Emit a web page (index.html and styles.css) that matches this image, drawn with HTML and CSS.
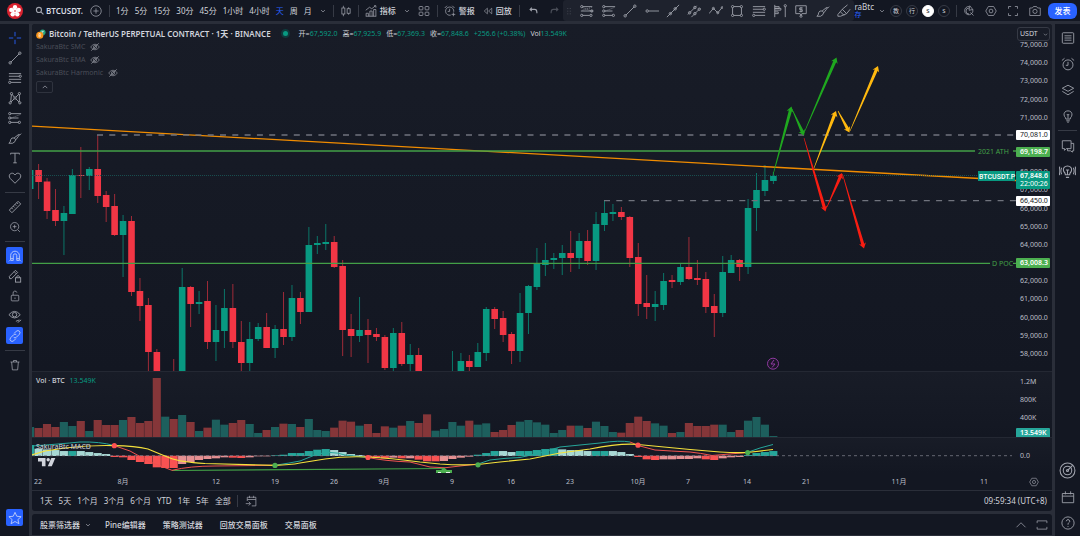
FILE: index.html
```html
<!DOCTYPE html>
<html lang="zh-CN">
<head>
<meta charset="utf-8">
<title>BTCUSDT.P</title>
<link rel="stylesheet" href="styles.css">
</head>
<body>
<svg class="sprite" aria-hidden="true">
  <symbol id="search" viewBox="0 0 16 16"><circle cx="7" cy="7" r="4.5"/><path d="M10.5 10.5 15 15"/></symbol>
  <symbol id="plus-circle" viewBox="0 0 16 16"><circle cx="8" cy="8" r="7"/><path d="M8 4.5v7M4.500 8h7"/></symbol>
  <symbol id="chev" viewBox="0 0 16 16"><path d="M3 5.500 8 10.500 13 5.500"/></symbol>
  <symbol id="chev-up" viewBox="0 0 16 16"><path d="M2 11 8 5 14 11"/></symbol>
  <symbol id="candles" viewBox="0 0 16 16"><path d="M4.500 1v3M4.500 12v3M11.500 3v2M11.500 11v2"/><rect x="2.500" y="4" width="4" height="8"/><rect x="9.500" y="5" width="4" height="6"/></symbol>
  <symbol id="indicators" viewBox="0 0 16 16"><path d="M1 7 6 3l3 2 5-4M12 1h2.500v2.500M1.500 15v-4h3v4M6.500 15V8h3v7M11.500 15V6h3v9M1 15h14"/></symbol>
  <symbol id="grid" viewBox="0 0 16 16"><rect x="1.500" y="2" width="5" height="4.500" rx="1"/><rect x="9.500" y="2" width="5" height="4.500" rx="1"/><rect x="1.500" y="9.500" width="5" height="4.500" rx="1"/><rect x="9.500" y="9.500" width="5" height="4.500" rx="1"/></symbol>
  <symbol id="alarm-plus" viewBox="0 0 16 16"><path d="M9 13.500A5.500 5.500 0 1 1 13 9M7.500 5v3.500H5M1 4l3-3M11 1l3 3M12.500 10v5M10 12.500h5"/></symbol>
  <symbol id="rewind" viewBox="0 0 16 16"><path d="M7 3.500 2 8l5 4.500zM14 3.500 9 8l5 4.500z"/></symbol>
  <symbol id="undo" viewBox="0 0 16 16"><path d="M5 3 2 6l3 3M2 6h8q4 0 4 5v2"/></symbol>
  <symbol id="redo" viewBox="0 0 16 16"><path d="M11 3l3 3-3 3M14 6H6q-4 0-4 5v2"/></symbol>
  <symbol id="drag" viewBox="0 0 16 16"><path stroke-dasharray="1.500 4" stroke-width="1.500" d="M5.500 2v13M10.500 2v13"/></symbol>
  <symbol id="fib-proj" viewBox="0 0 16 16"><path d="M3 3h11M1 8h14M3 13h8"/><path stroke-dasharray="1 1.500" d="M3 4 13 8M3 7 13 4"/><circle cx="2" cy="3" r="1.300"/><circle cx="13.500" cy="8" r="1.300"/><circle cx="2" cy="13" r="1.300"/><circle cx="12.500" cy="13" r="1.300"/></symbol>
  <symbol id="fib-long" viewBox="0 0 16 16"><path d="M3 3h12M3 8h9M3 13h9"/><path stroke-dasharray="1 1.500" d="M4 8 14 4"/><circle cx="2" cy="3" r="1.300"/><circle cx="2" cy="8" r="1.300"/><circle cx="2" cy="13" r="1.300"/><circle cx="13" cy="13" r="1.300"/></symbol>
  <symbol id="trend" viewBox="0 0 16 16"><path d="M3 13 13 3"/><circle cx="2.500" cy="13.500" r="1.400"/><circle cx="13.500" cy="2.500" r="1.400"/></symbol>
  <symbol id="ray" viewBox="0 0 16 16"><path d="M4 8h12"/><circle cx="2.500" cy="8" r="1.400"/></symbol>
  <symbol id="xline" viewBox="0 0 16 16"><path d="M1 15 15 1"/><circle cx="5" cy="11" r="1.400"/><circle cx="10.500" cy="5.500" r="1.400"/></symbol>
  <symbol id="channel" viewBox="0 0 16 16"><path d="M1 12 11 2M5 15 15 5"/><circle cx="3" cy="10" r="1.400"/><circle cx="9" cy="4" r="1.400"/><circle cx="9" cy="11" r="1.400"/><circle cx="14" cy="6" r="1.400"/></symbol>
  <symbol id="zigzag" viewBox="0 0 16 16"><path d="M0 11 5 5l5 5 5-6"/><circle cx="5" cy="5" r="1.200"/><circle cx="10" cy="10" r="1.200"/><circle cx="15" cy="4" r="1"/></symbol>
  <symbol id="rect" viewBox="0 0 16 16"><rect x="3" y="3" width="10" height="10"/><g class="dot"><circle cx="3" cy="3" r="1.300"/><circle cx="13" cy="3" r="1.300"/><circle cx="3" cy="13" r="1.300"/><circle cx="13" cy="13" r="1.300"/></g></symbol>
  <symbol id="fib" viewBox="0 0 16 16"><path d="M1 3h14M1 6h12M1 9.500h14M3.500 13H15"/><circle cx="14" cy="6" r="1.300"/><circle cx="2" cy="13" r="1.300"/></symbol>
  <symbol id="profile" viewBox="0 0 16 16"><path d="M2 1v14M2 3h5v2H2M2 5h7v2H2M2 9h4v2H2M14 3v12"/><circle cx="14" cy="2" r="1.300"/></symbol>
  <symbol id="note" viewBox="0 0 16 16"><path d="M2 2h12v9H9l-1 2-1-2H2zM10 4.500H6.500v2h3v2H6M8 3.500v6"/><circle cx="8" cy="14" r="1.200"/></symbol>
  <symbol id="brush" viewBox="0 0 16 16"><path d="M1 14q2-1 2-4 1-3 4-2 3 1 1 4-2 3-7 2zM7 8l5-4q2-1 0 2L9 10M13 5l2-2"/></symbol>
  <symbol id="highlight" viewBox="0 0 16 16"><path d="M1 14h3l7-3-5-5-5 6zM6 6l6-5M11 11l4-5M4 9l4 4"/></symbol>
  <symbol id="quick" viewBox="0 0 16 16"><path d="M8 2a5.500 5.500 0 1 0 5 4M8 12a4 4 0 0 1 0-8M10 10l4 4M9 1 8 7l5-1z"/></symbol>
  <symbol id="hex" viewBox="0 0 16 16"><path d="M4.500 2h7L15 8l-3.500 6h-7L1 8z"/><circle cx="8" cy="8" r="2.500"/></symbol>
  <symbol id="full" viewBox="0 0 16 16"><path d="M2 5V2h3.500M10.500 2H14v3M14 11v3h-3.500M5.500 14H2v-3"/></symbol>
  <symbol id="camera" viewBox="0 0 16 16"><path d="M1 4h3.500L6 2h4l1.500 2H15v10H1z"/><circle cx="8" cy="8.500" r="2.800"/></symbol>
  <symbol id="cross" viewBox="0 0 16 16"><path d="M8 1v5M8 10v5M1 8h5M10 8h5"/></symbol>
  <symbol id="pattern" viewBox="0 0 16 16"><path d="M3 13 4 3l4 5 5-5v10L8 8l-5.500 5.500"/><g class="dot"><circle cx="4" cy="3" r="1.300"/><circle cx="13" cy="3" r="1.300"/><circle cx="2.500" cy="13.500" r="1.300"/><circle cx="13.500" cy="13.500" r="1.300"/><circle cx="8" cy="8" r="1.300"/></g></symbol>
  <symbol id="text" viewBox="0 0 16 16"><path d="M3 4V2.500h10V4M8 2.500v11M6 13.500h4"/></symbol>
  <symbol id="heart" viewBox="0 0 16 16"><path d="M8 14 2.500 8.500C-1 4 5 0 8 4.500 11 0 17 4 13.500 8.500z"/></symbol>
  <symbol id="ruler" viewBox="0 0 16 16"><path d="M1.500 11.500 11.500 1.500l3 3-10 10zM4 9l1.500 1.500M6 7l1.500 1.500M8 5l1.500 1.500M10 3l1.500 1.500"/></symbol>
  <symbol id="zoom" viewBox="0 0 16 16"><circle cx="7.500" cy="7.500" r="5.500"/><path d="m12 12 2.500 2.500M7.500 5v5M5 7.500h5"/></symbol>
  <symbol id="magnet" viewBox="0 0 16 16"><path d="M3 13V7.500a5 5 0 0 1 10 0V13h-3V7.500a2 2 0 0 0-4 0V13zM3 11h3M10 11h3M1 14l1-1M15 14l-1-1"/></symbol>
  <symbol id="pen-lock" viewBox="0 0 16 16"><path d="M2 11 1.500 8.500l7-7 2.500 2.500-7 7zM7 3l2.500 2.500"/><rect x="8.500" y="10" width="6" height="5"/><path d="M10 10V8.500q1.500-2 3 0V10"/></symbol>
  <symbol id="lock" viewBox="0 0 16 16"><rect x="3" y="7" width="10" height="7.500" rx="1"/><path d="M5.500 7V4.500a2.500 2.500 0 0 1 5-1M8 10v2"/></symbol>
  <symbol id="eye" viewBox="0 0 16 16"><path d="M1 6.500Q7.500-1 14 6.500 7.500 14 1 6.500z"/><circle cx="7.500" cy="6.500" r="2.500"/><path d="M9 14l4-1.500M11 15.500l4-3"/></symbol>
  <symbol id="link" viewBox="0 0 16 16"><path d="m7 5 2.500-2.500q2-1.500 3.500 0t0 3.500L9.500 9.500Q8 11 6.500 9.500M9 11l-2.500 2.500q-2 1.500-3.500 0t0-3.500L6.500 6.500Q8 5 9.500 6.500"/></symbol>
  <symbol id="trash" viewBox="0 0 16 16"><path d="M2 4h12M3.500 4l1 10.500h7l1-10.500M6 4V2h4v2"/></symbol>
  <symbol id="star" viewBox="0 0 16 16"><path d="m8 1.500 2 4.500 5 .5-3.700 3.300L12.500 14.500 8 12l-4.500 2.500 1.200-4.700L1 6.500 6 6z"/></symbol>
  <symbol id="list" viewBox="0 0 16 16"><rect x="1.500" y="2" width="13" height="12" rx="1"/><path d="M4 5.500h8M4 8h8M4 10.500h8"/></symbol>
  <symbol id="alarm" viewBox="0 0 16 16"><circle cx="8" cy="9" r="5.700"/><path d="M8 5.500V9.500H5.500M1 4l3-2.500M12 1.500 15 4"/></symbol>
  <symbol id="layers" viewBox="0 0 16 16"><path d="m8 2.500 6.500 3.500L8 9.500 1.500 6zM1.500 9.500 8 13.500l6.500-4"/></symbol>
  <symbol id="bulb" viewBox="0 0 16 16"><path d="M5.500 11.500q0-1.500-1.500-3C0.500 0 15.500 0 12 8.500q-1.500 1.500-1.500 3zM6 13.500h4M7 15h2M6.500 6.500h3M8 6.500V11"/></symbol>
  <symbol id="chat" viewBox="0 0 16 16"><path d="M1.500 2h10v9H6l-2 2v-2H1.500zM11.500 5h3v8.500H13V15l-2-1.500H7.500V11"/></symbol>
  <symbol id="bulb-live" viewBox="0 0 16 16"><path d="M6 11q0-1.500-1.500-3C2 1 14 1 11.500 8 10 9.500 10 11 10 11zM6.500 13.500h3M6.500 6.500h3M8 6.500V11M2.500 4.500q-1.500 3 0 6M.7 3.500q-1 4 0 8M13.500 4.500q1.500 3 0 6M15.300 3.500q1 4 0 8"/></symbol>
  <symbol id="radar" viewBox="0 0 16 16"><circle cx="8" cy="8" r="7"/><circle cx="8" cy="8" r="4"/><circle cx="8" cy="8" r="1"/><path d="m8 8 5-5"/></symbol>
  <symbol id="calendar" viewBox="0 0 16 16"><path d="M1.500 4h13v10.500h-13zM1.500 7h13M5 1.500V5M11 1.500V5"/></symbol>
  <symbol id="help" viewBox="0 0 16 16"><circle cx="8" cy="8" r="7"/><path d="M6 6q.5-2 2-2t2 2Q10 7 8.500 8q-.5.500-.5 2M8 11.500V12.500"/></symbol>
  <symbol id="goto" viewBox="0 0 16 16"><path d="M3 8V3h11.500v11.500H9M3 6h11.500M6 1v3M11.500 1v3M1 11.500h6M5 9l2.500 2.500L5 14"/></symbol>
  <symbol id="panel" viewBox="0 0 16 16"><path d="M1.500 5.500V2.500h13v3M1.500 10.500v3h13v-3"/></symbol>
  <symbol id="eye-off" viewBox="0 0 16 16"><path d="M1 8q7-9 14 0-7 9-14 0zM2 14 14 2"/><circle cx="8" cy="8" r="2.500"/></symbol>
</svg>

<div class="app">
  <header class="topbar">
    <svg class="logo" viewBox="0 0 16 16" aria-hidden="true"><circle cx="8" cy="8" r="8" fill="#d8232f"/><g fill="#fff"><circle cx="8" cy="4.200" r="2.200"/><circle cx="11.700" cy="6.900" r="2.200"/><circle cx="10.300" cy="11.200" r="2.200"/><circle cx="5.700" cy="11.200" r="2.200"/><circle cx="4.300" cy="6.900" r="2.200"/><circle cx="8" cy="8" r="2.500"/></g><circle cx="8" cy="8" r="1" fill="#e87880"/></svg>
    <button class="symbol-search"><svg class="ic s9"><use href="#search"/></svg>BTCUSDT.</button>
    <button class="add" aria-label="比较"><svg class="ic s12"><use href="#plus-circle"/></svg></button>
    <i class="vsep"></i>
    <nav class="frames">
      <button>1分</button><button>5分</button><button>15分</button><button>30分</button><button>45分</button><button>1小时</button><button>4小时</button><button class="active">天</button><button>周</button><button>月</button>
      <button class="more" aria-label="更多周期"><svg class="ic s6"><use href="#chev"/></svg></button>
    </nav>
    <i class="vsep"></i>
    <button class="style" aria-label="K线图"><svg class="ic s12"><use href="#candles"/></svg></button>
    <i class="vsep"></i>
    <div class="tools">
      <button class="labelled"><svg class="ic s12"><use href="#indicators"/></svg>指标</button>
      <button aria-label="收藏指标"><svg class="ic s6"><use href="#chev"/></svg></button>
      <button aria-label="模板"><svg class="ic s12"><use href="#grid"/></svg></button>
    </div>
    <i class="vsep"></i>
    <div class="tools">
      <button class="labelled"><svg class="ic s12"><use href="#alarm-plus"/></svg>警报</button>
      <button class="labelled"><svg class="ic s10"><use href="#rewind"/></svg>回放</button>
    </div>
    <i class="vsep"></i>
    <div class="history">
      <button aria-label="撤销"><svg class="ic s9"><use href="#undo"/></svg></button>
      <button aria-label="重做" disabled><svg class="ic s9"><use href="#redo"/></svg></button>
    </div>
    <div class="favorites">
      <svg class="ic grip"><use href="#drag"/></svg>
      <button aria-label="斐波那契"><svg class="ic"><use href="#fib-proj"/></svg></button>
      <button aria-label="多头"><svg class="ic"><use href="#fib-long"/></svg></button>
      <button aria-label="趋势线"><svg class="ic"><use href="#trend"/></svg></button>
      <button aria-label="水平射线"><svg class="ic"><use href="#ray"/></svg></button>
      <button aria-label="延长线"><svg class="ic"><use href="#xline"/></svg></button>
      <button aria-label="平行通道"><svg class="ic"><use href="#channel"/></svg></button>
      <button aria-label="路径"><svg class="ic"><use href="#zigzag"/></svg></button>
      <button aria-label="矩形"><svg class="ic"><use href="#rect"/></svg></button>
      <button aria-label="回撤"><svg class="ic"><use href="#fib"/></svg></button>
      <button aria-label="成交量分布"><svg class="ic"><use href="#profile"/></svg></button>
      <button aria-label="价格标记"><svg class="ic"><use href="#note"/></svg></button>
      <button aria-label="画笔"><svg class="ic"><use href="#brush"/></svg></button>
      <button aria-label="荧光笔"><svg class="ic"><use href="#highlight"/></svg></button>
    </div>
    <button class="layout-name"><span>raBtc</span><span class="save">存</span></button>
    <button class="layout-more" aria-label="管理布局"><svg class="ic s6"><use href="#chev"/></svg></button>
    <div class="circles"><button>教</button><button>行</button><button class="on">S</button><button>S</button></div>
    <i class="vsep"></i>
    <div class="actions">
      <button aria-label="快速搜索"><svg class="ic s12"><use href="#quick"/></svg></button>
      <button aria-label="设置"><svg class="ic s12"><use href="#hex"/></svg></button>
      <button aria-label="全屏"><svg class="ic s12"><use href="#full"/></svg></button>
      <button aria-label="快照"><svg class="ic s12"><use href="#camera"/></svg></button>
    </div>
    <button class="publish">发表</button>
  </header>

  <aside class="drawbar">
    <button class="blue" aria-label="十字线"><svg class="ic"><use href="#cross"/></svg></button>
    <button aria-label="趋势线"><svg class="ic"><use href="#trend"/></svg></button>
    <button aria-label="斐波那契"><svg class="ic"><use href="#fib"/></svg></button>
    <button aria-label="形态"><svg class="ic"><use href="#pattern"/></svg></button>
    <button aria-label="预测"><svg class="ic"><use href="#fib-long"/></svg></button>
    <button aria-label="画笔"><svg class="ic"><use href="#brush"/></svg></button>
    <button aria-label="文字"><svg class="ic"><use href="#text"/></svg></button>
    <button aria-label="图标"><svg class="ic"><use href="#heart"/></svg></button>
    <hr>
    <button aria-label="测量"><svg class="ic"><use href="#ruler"/></svg></button>
    <button aria-label="放大"><svg class="ic s12"><use href="#zoom"/></svg></button>
    <hr>
    <button class="on" aria-label="磁铁"><svg class="ic"><use href="#magnet"/></svg></button>
    <button aria-label="保持绘图"><svg class="ic"><use href="#pen-lock"/></svg></button>
    <button aria-label="锁定"><svg class="ic s12"><use href="#lock"/></svg></button>
    <button aria-label="隐藏"><svg class="ic"><use href="#eye"/></svg></button>
    <button class="on" aria-label="同步"><svg class="ic"><use href="#link"/></svg></button>
    <hr>
    <button aria-label="删除"><svg class="ic s12"><use href="#trash"/></svg></button>
    <button class="on last" aria-label="收藏"><svg class="ic"><use href="#star"/></svg></button>
  </aside>

  <main class="center">
    <section class="chart">
      <div class="pane price-pane">
        <svg class="plot" viewBox="32 24 984 347">
          <g id="candlesticks"></g>
          <path class="orange" d="M32 126.200 1016 180.500"/>
          <path class="dash" d="M97 135H1016M604 200.700H1016"/>
          <path class="green" d="M32 151H975M1013 151h3M32 263.300H990M1013 263.300h3"/>
          <path class="last-line" d="M32 175.500H978"/>
          <g id="arrows"></g>
          <g class="event"><circle cx="773" cy="363.700" r="5.500"/><path d="m774 360-3 4h4l-3 3.500"/></g>
          <text class="level" x="978" y="153.500">2021 ATH</text>
          <text class="level" x="992" y="266">D POC</text>
          <rect class="last-tag" x="978" y="171" width="37" height="10"/>
          <text class="last-text" x="979" y="178.500">BTCUSDT.P</text>
        </svg>
        <div class="axis prices">
          <div class="currency"><select aria-label="货币"><option>USDT</option></select><svg class="ic s6"><use href="#chev"/></svg></div>
          <ul>
            <li>75,000.0</li><li>74,000.0</li><li>73,000.0</li><li>72,000.0</li><li>71,000.0</li><li>70,000.0</li><li>69,000.0</li><li>68,000.0</li><li>67,000.0</li><li>66,000.0</li><li>65,000.0</li><li>64,000.0</li><li>63,000.0</li><li>62,000.0</li><li>61,000.0</li><li>60,000.0</li><li>59,000.0</li><li>58,000.0</li>
          </ul>
          <span class="tag white t-high">70,081.0</span>
          <span class="tag green-tag t-ath">69,198.7</span>
          <span class="tag teal t-last">67,848.6<small>22:00:26</small></span>
          <span class="tag white t-low">66,450.0</span>
          <span class="tag green-tag t-poc">63,008.3</span>
        </div>
        <div class="legend">
          <div class="headline">
            <svg class="coin" viewBox="0 0 12 12" aria-hidden="true"><circle cx="8" cy="4" r="3.500" fill="#26a17b"/><path d="M6.500 2.800h3M8 2.800v3" stroke="#fff"/><circle cx="4.500" cy="7.500" r="4.300" fill="#f7931a"/><path d="M3.500 5.500h1.600q1 1-.1 2 1.300 1-.2 2H3.500zM3.500 7.500H5" stroke="#fff" fill="none"/></svg>
            <h1>Bitcoin / TetherUS PERPETUAL CONTRACT · 1天 · BINANCE</h1>
            <i class="status"></i>
            <p class="ohlc"><span>开=<b>67,592.0</b></span><span>高=<b>67,925.9</b></span><span>低=<b>67,369.3</b></span><span>收=<b>67,848.6</b></span><b>+256.6 (+0.38%)</b><span>Vol<b>13.549K</b></span></p>
          </div>
          <div class="study">SakuraBtc SMC<svg class="ic s10"><use href="#eye-off"/></svg></div>
          <div class="study">SakuraBtc EMA<svg class="ic s10"><use href="#eye-off"/></svg></div>
          <div class="study">SakuraBtc Harmonic<svg class="ic s10"><use href="#eye-off"/></svg></div>
          <button class="collapse" aria-label="收起"><svg class="ic s6"><use href="#chev-up"/></svg></button>
        </div>
      </div>

      <div class="pane vol-pane">
        <svg class="plot" viewBox="32 372 984 65"><g id="volume"></g></svg>
        <div class="axis vols"><ul><li>1.2M</li><li>800K</li><li>400K</li></ul><span class="tag teal t-vol">13.549K</span></div>
        <div class="caption">Vol · BTC <b>13.549K</b></div>
      </div>

      <div class="pane macd-pane">
        <svg class="plot" viewBox="32 438 984 35">
          <g id="histogram"></g>
          <path class="zero" d="M32 455.700H1012"/>
          <path class="divergence" d="M172 470.500 444 468.500"/>
          <path class="fast-up" d="M32 446Q60 444 80 442 100 441.500 114 445.500M275 465.300Q290 463 300 461L315 455Q330 450 345 455L368 457.500M478 464 490 460Q505 458 520 457.500L540 453 560 447 580 445 600 443Q620 440 630 442M747 452.500 760 448 773 444.500"/>
          <path class="fast-down" d="M114 445.500 130 451 150 462 172 470.300Q190 466 215 466L275 465.300M368 457.500Q385 461 410 462L430 467Q445 469 460 466L478 464M630 442 640 446 655 450Q670 451 690 452 700 453 712 455.500L747 452.500"/>
          <path class="signal" d="M32 455 45 451 65 448Q90 445 114 445.600 135 446 148 449L160 454 170 458Q180 462 205 463.500L275 465.300Q290 465 300 463L325 459Q345 456 368 457 390 458 420 462L440 464Q460 465.500 478 464.500L500 462 530 459 560 453 590 449Q620 443 638 444.500L690 449.500 720 452Q735 453 747 452.500L773 449.500"/>
          <g class="sell"><circle cx="114.300" cy="445.700" r="2.600"/><circle cx="368" cy="457.500" r="2.600"/><circle cx="638" cy="445.200" r="2.600"/></g>
          <g class="buy"><circle cx="275" cy="465.400" r="2.600"/><circle cx="478" cy="464.800" r="2.600"/><circle cx="747.700" cy="452.500" r="2.600"/><path d="M436 470h5l3-2.500 3 2.500h5v3.700h-16z"/></g>
          <path class="bull" d="M438 472.500h3M446 472.500h4"/>
          <g class="mark"><path d="M38 458h7.500v8.300h-3.600v-4.800H38z"/><circle cx="48.200" cy="459.800" r="1.700"/><path d="M51.300 458h4l-3.500 8.300h-4z"/></g>
        </svg>
        <div class="axis"><ul><li>0.0</li></ul></div>
        <div class="caption macd-name">SakuraBtc MACD</div>
      </div>

      <div class="timeaxis">
        <svg class="plot" viewBox="32 473 984 17">
          <text x="38" y="484">22</text><text x="123" y="484">8月</text><text x="216" y="484">12</text><text x="275" y="484">19</text><text x="334" y="484">26</text><text x="384" y="484">9月</text><text x="452" y="484">9</text><text x="511" y="484">16</text><text x="570" y="484">23</text><text x="638" y="484">10月</text><text x="688" y="484">7</text><text x="747" y="484">14</text><text x="806" y="484">21</text><text x="899" y="484">11月</text><text x="984" y="484">11</text>
        </svg>
        <button aria-label="坐标设置"><svg class="ic s10"><use href="#hex"/></svg></button>
      </div>

      <div class="ranges">
        <button>1天</button><button>5天</button><button>1个月</button><button>3个月</button><button>6个月</button><button>YTD</button><button>1年</button><button>5年</button><button>全部</button>
        <i class="vsep"></i>
        <button aria-label="前往日期"><svg class="ic s12"><use href="#goto"/></svg></button>
        <button class="clock">09:59:34 (UTC+8)</button>
      </div>
    </section>

    <footer class="tabs">
      <button class="screener">股票筛选器<svg class="ic s6"><use href="#chev"/></svg></button><button>Pine编辑器</button><button>策略测试器</button><button>回放交易面板</button><button>交易面板</button>
      <div class="tabs-end"><button aria-label="展开"><svg class="ic s12"><use href="#chev-up"/></svg></button><button aria-label="最大化"><svg class="ic s12"><use href="#panel"/></svg></button></div>
    </footer>
  </main>

  <aside class="sidebar">
    <div><button aria-label="观察列表"><svg class="ic"><use href="#list"/></svg></button><button aria-label="警报"><svg class="ic"><use href="#alarm"/></svg></button><button aria-label="图层"><svg class="ic"><use href="#layers"/></svg></button><button aria-label="观点"><svg class="ic"><use href="#bulb"/></svg></button></div>
    <hr>
    <div><button aria-label="聊天"><svg class="ic"><use href="#chat"/></svg></button><button aria-label="直播"><svg class="ic s17"><use href="#bulb-live"/></svg></button></div>
    <div class="end"><button aria-label="雷达"><svg class="ic s17"><use href="#radar"/></svg></button><button aria-label="日历"><svg class="ic"><use href="#calendar"/></svg></button><button aria-label="帮助"><svg class="ic"><use href="#help"/></svg></button></div>
  </aside>
</div>
<script src="chart.js"></script>
</body>
</html>
```
FILE: styles.css
```css
* { box-sizing: border-box; margin: 0; padding: 0; }
body {
  background: #2a2e39;
  color: #d1d3da;
  font: 8px/12px "Noto Sans", "Noto Sans CJK SC", sans-serif;
}
button { background: none; border: 0; color: inherit; font: inherit; display: flex; align-items: center; white-space: nowrap; }
ul { list-style: none; }
b { font-weight: 400; }
hr { border: 0; height: 1px; background: #363a45; }
.sprite { position: absolute; width: 0; height: 0; }
.ic { width: 14px; height: 14px; flex: none; fill: none; stroke: #a0a3ad; stroke-width: 1; }
.s6 { width: 6px; height: 6px; stroke-width: 2; }
.s9 { width: 9px; height: 9px; stroke-width: 2; }
.s10 { width: 10px; height: 10px; stroke-width: 1; }
.s12 { width: 12px; height: 12px; }
.s17 { width: 17px; height: 17px; }
.vsep { width: 1px; height: 12px; background: #363a45; flex: none; }

.app { display: grid; grid-template: 24px minmax(0, 1fr) / 32px minmax(0, 1fr) 28px; height: 100vh; min-height: 500px; }

.topbar {
  grid-column: 1 / -1;
  display: flex; align-items: center;
  background: #131722;
  border-bottom: 3px solid #2a2e39;
}
.topbar > * { flex: none; }
.logo { width: 16px; height: 16px; margin-left: 7px; }
.symbol-search { margin-left: 12px; gap: 2px; font-weight: 600; color: #d8dbe3; }
.add { margin: 0 7px; }
.frames { display: flex; gap: 6px; margin-left: 6px; }
.frames .active { color: #2962ff; }
.frames .more { margin: 0 7px 0 2px; }
.style { margin: 0 6px; }
.tools { display: flex; gap: 8px; margin: 0 7px 0 6px; }
.labelled { gap: 3px; font-weight: 500; }
.history { display: flex; gap: 12px; margin: 0 auto 0 9px; }
.history :disabled { opacity: .4; }
.favorites {
  display: flex; align-items: center; justify-content: space-between;
  width: 27%; height: 21px; padding: 0 3px 0 2px;
  background: #1e222d; border-radius: 3px;
}
.favorites .grip { width: 8px; height: 10px; opacity: .5; stroke-width: 2; }
.dot { fill: #131722; }
.layout-name { flex-direction: column; align-items: flex-start; line-height: 8px; }
.save { color: #2962ff; font-size: 7px; }
.layout-more { margin: 0 5px; }
.circles { display: flex; gap: 4px; margin-right: 6px; }
.circles button { width: 12px; height: 12px; border: 1px solid #363a45; border-radius: 6px; justify-content: center; font-size: 6px; line-height: 8px; }
.circles .on { background: #fff; color: #131722; border-color: #fff; }
.actions { display: flex; gap: 10px; margin: 0 7px 0 6px; }
.publish { background: #2962ff; color: #fff; height: 16px; width: 29px; justify-content: center; border-radius: 6px; margin-right: 3px; font-weight: 500; }

.drawbar {
  display: flex; flex-direction: column; align-items: center; gap: 3px;
  padding: 5px 0 10px;
  background: #131722; border-right: 3px solid #2a2e39;
}
.drawbar button { width: 17px; height: 17px; flex: none; justify-content: center; border-radius: 2px; }
.drawbar hr { width: 20px; margin: 3px 0 2px; flex: none; }
.drawbar .on { background: #2962ff; }
.drawbar .on .ic { stroke: #c3d0f8; }
.drawbar .blue .ic { stroke: #2962ff; }
.drawbar .last { margin-top: auto; }

.sidebar {
  display: flex; flex-direction: column; align-items: center; gap: 6px;
  padding: 5px 0;
  background: #131722; border-left: 3px solid #2a2e39;
}
.sidebar div { display: flex; flex-direction: column; gap: 9px; }
.sidebar button { width: 17px; height: 17px; justify-content: center; }
.sidebar hr { width: 19px; }
.sidebar .end { margin-top: auto; }

.center { display: flex; flex-direction: column; gap: 3px; min-width: 0; min-height: 0; }
.chart {
  flex: 1; min-height: 0;
  display: grid; grid-template-rows: minmax(0, 347fr) minmax(0, 66fr) minmax(0, 36fr) 17px 21px;
  border-radius: 3px; overflow: hidden; background: #131722;
}
.pane, .timeaxis { display: grid; grid-template: minmax(0, 1fr) / minmax(0, 1fr) 36px; position: relative; min-height: 0; }
.pane { background: linear-gradient(#181c27, #131722); }
.vol-pane, .macd-pane { border-top: 1px solid #242833; }
.plot { width: 100%; height: 100%; min-height: 0; display: block; }

.up { fill: #089981; }
.down { fill: #f23645; }
.up-wick { fill: #0b7568; }
.down-wick { fill: #9f2b38; }
.vol-up { fill: #1d5f5d; }
.vol-down { fill: #853639; }
.T { fill: #26a69a; }
.L { fill: #a8d8d4; }
.R { fill: #f95252; }
.P { fill: #e69092; }
.plot path { fill: none; }
.orange { stroke: #f08c00; stroke-width: 1.300; }
.dash { stroke: #70737d; stroke-width: 1.300; stroke-dasharray: 6 6.300; }
.green { stroke: #43a047; stroke-width: 1.300; }
.last-line { stroke: #1b5c5a; stroke-width: .8; stroke-dasharray: 1 1; }
.event { fill: #1b1528; stroke: #8e3aa0; }
.level { fill: #43a047; font-size: 7px; }
.last-tag { fill: #089981; }
.last-text { fill: #fff; font: 500 7px Roboto, sans-serif; }
.zero { stroke: #787b86; stroke-width: .8; stroke-dasharray: 3 3; }
.divergence { stroke: #43a047; stroke-width: 1.200; }
.fast-up { stroke: #26a69a; }
.fast-down { stroke: #ef5350; }
.signal { stroke: #f5e13c; stroke-width: 1.200; }
.sell { fill: #ff5252; }
.plot .buy, .plot .buy path { fill: #4caf50; }
.bull { stroke: #e8f5e9; }
.plot .mark, .plot .mark path { fill: #d1d4dc; }

.axis { position: relative; font-size: 7px; line-height: 8px; padding-left: 4px; color: #bcbfc8; }
.prices { display: flex; flex-direction: column; padding-top: 3px; }
.prices ul { flex: 1; display: flex; flex-direction: column; justify-content: space-between; padding-bottom: 13px; }
.currency { position: relative; height: 14px; width: 33px; margin-left: -3px; border: 1px solid #363a45; border-radius: 3px; display: flex; align-items: center; flex: none; }
.currency select { appearance: none; background: none; border: 0; color: #d1d4dc; font: inherit; width: 100%; padding-left: 2px; outline: 0; }
.currency .ic { position: absolute; right: 1px; width: 5px; height: 5px; }
.tag { position: absolute; left: 0; width: 34px; padding: 1px 0 1px 4px; transform: translateY(-50%); border-radius: 1px; }
.tag small { display: block; font-size: 7px; font-weight: 400; }
.white { background: #fff; color: #131722; }
.green-tag { background: #4caf50; color: #fff; font-weight: 600; }
.teal { background: #089981; color: #fff; font-weight: 600; }
.t-high { top: 32%; }
.t-ath { top: 37%; }
.t-last { top: 45%; }
.t-low { top: 51%; }
.t-poc { top: 69%; }
.t-vol { top: 94%; background: #26a69a; }
.vols ul { display: flex; flex-direction: column; gap: 10px; padding-top: 6px; }
.macd-pane .axis { padding-top: 14px; }

.legend { position: absolute; top: 3px; left: 4px; display: flex; flex-direction: column; align-items: flex-start; }
.headline { display: flex; align-items: center; }
.coin { width: 10px; height: 10px; stroke-width: .7; }
.legend h1 { font-size: 8px; line-height: 13px; font-weight: 600; margin-left: 3px; white-space: nowrap; color: #d1d4dc; }
.status { width: 9px; height: 9px; border: 2px solid #0f3a3c; border-radius: 5px; background: #089981; margin: 0 9px 0 10px; }
.ohlc { display: flex; gap: 5px; font-size: 7px; white-space: nowrap; }
.ohlc b, .caption b { color: #089981; }
.study { display: flex; align-items: center; gap: 5px; font-size: 7px; line-height: 13px; color: #4a4d58; }
.collapse { width: 17px; height: 12px; margin-top: 2px; justify-content: center; border: 1px solid #2f333e; border-radius: 2px; }
.caption { position: absolute; top: 4px; left: 4px; font-size: 7px; line-height: 10px; font-weight: 500; }
.caption b { margin-left: 3px; }
.macd-name { font-weight: 400; }

.timeaxis text { font-size: 7px; fill: #bcbfc8; text-anchor: middle; }
.timeaxis button { justify-content: center; }

.ranges { display: flex; align-items: center; gap: 6px; padding: 0 5px 0 8px; border-top: 1px solid #2a2e39; }
.ranges .vsep { margin-right: 1px; }
.clock { margin-left: auto; }

.tabs { display: flex; align-items: center; gap: 17px; height: 21px; padding: 0 4px 0 8px; background: #131722; border-radius: 3px 3px 0 0; margin-bottom: 1px; font-weight: 500; flex: none; }
.tabs button { gap: 5px; }
.tabs .screener { margin-right: -3px; }
.tabs-end { display: flex; gap: 9px; margin-left: auto; }
```
FILE: chart.js
```js
const NS = "http://www.w3.org/2000/svg";
const x = i => 38.6 + 8.446 * i;

function add(parent, tag, cls, attrs) {
  const node = document.createElementNS(NS, tag);
  if (cls) node.setAttribute("class", cls);
  for (const key in attrs) node.setAttribute(key, attrs[key]);
  parent.appendChild(node);
}

// index: side, wick top, wick bottom, body top, body bottom
const candles = `-1 g 170 189 170 189
0 r 164 199 170 182
1 r 178 219 181.5 211
2 r 189 226 210 221
3 g 206 255 213 221
4 g 169 214 175 214
5 r 147 198 175 176
6 g 167 190 169 176
7 r 135 203 169 196
8 r 191 222 195 207
9 r 194 236 206 235
10 g 215 277 221 235
11 r 216 296 221 292
12 r 278 321 291 306
13 r 298 371 305 352
14 r 349 371 352 371
16 r 359 371 371 371
17 g 268 371 287 371
18 r 286 327 287 304
19 g 291 314 302 304
20 r 281 349 301 342
21 g 305 361 330 342
22 g 289 348 308 331
23 r 284 348 308 342
24 r 321 371 342 363
25 g 322 371 339 363
26 g 323 341 327 339
27 r 313 348 327 348
28 g 325 358 329 348
29 r 292 345 329 337
30 g 285 341 298 337
31 r 292 324 298 312
32 g 227 312 245 312
33 g 236 254 243 245
34 g 224 250 242 244
35 r 236 268 242 267
36 r 260 356 266 330
37 r 314 357 329 336
38 g 297 342 330 336
39 r 319 363 330 335
40 r 328 341 334 337
41 r 335 370 337 368
42 g 328 371 333 368
43 r 322 366 333 364
44 g 344 371 355 364
45 r 348 371 355 371
49 g 351 371 371 371
50 g 353 371 361 371
51 r 355 371 361 367
52 g 343 367 352 367
53 g 307 361 309 353
54 r 307 329 309 319
55 r 311 342 318 335
56 r 332 364 334 351
57 g 293 362 313 351
58 g 285 334 286 313
59 g 248 290 264 287
60 g 243 276 260 265
61 g 253 269 258 260
62 g 245 275 253 258
63 r 231 272 253 258
64 g 233 269 241 258
65 r 230 265 241 261
66 g 212 270 224 261
67 g 201 231 213 225
68 g 204 221 212 214
69 r 207 220 212 217
70 r 216 267 217 258
71 r 243 316 257 304
72 r 275 319 303 307
73 g 291 321 304 307
74 g 273 310 281 305
75 r 275 288 280 282
76 g 263 285 267 282
77 r 237 280 267 279
78 r 260 285 278 280
79 r 272 313 279 307
80 r 294 337 306 313
81 g 256 317 272 313
82 g 255 273 260 273
83 r 259 281 260 267
84 g 199 274 208 267
85 g 173 231 190 208
86 g 165 196 180 191
87 g 172 184 176 181`;
const sticks = document.getElementById("candlesticks");
for (const line of candles.split("\n")) {
  const [i, side, high, low, top, bottom] = line.split(" ");
  const cls = side === "g" ? "up" : "down";
  add(sticks, "rect", cls + "-wick", { x: x(+i) - 0.5, y: high, width: 1, height: low - high });
  add(sticks, "rect", cls, { x: x(+i) - 3.3, y: top, width: 6.6, height: bottom - top });
}

// volume bar heights, in thirds of a pixel, from index -1
const volumes = "g30 r27 r39 r30 g45 g33 r48 g18 r51 r36 r36 g51 r60 r42 r48 r177 g61 r54 g66 r45 g18 r28 g52 g37 r42 r51 g39 g12 r21 g30 r40 g39 r30 g54 g21 g18 r28 r49 r46 g34 r39 r12 r32 g28 r34 g48 r42 r68 g19 g24 g45 g34 r49 g37 g41 r15 r21 r36 g46 g51 g44 g37 g12 g21 r34 g34 r27 g46 g33 g15 r13 r42 r61 r48 g41 g34 r12 g15 r42 r33 r33 r37 g37 g15 r21 g49 g60 g37 g3".split(" ");
const volume = document.getElementById("volume");
volumes.forEach((bar, k) => {
  const h = bar.slice(1) / 3;
  add(volume, "rect", bar[0] === "g" ? "vol-up" : "vol-down", { x: x(k - 1) - 4.1, y: 437 - h, width: 8.1, height: h });
});

// T/L rise above zero, R/P fall below it
const macd = "T32 L21 L19 L17 L14 T14 L14 L11 L8 L5 R3 R4 R12 R18 R24 R34 R36 R36 P24 P18 P12 P9 P7 P4 R5 R6 P4 P1 P1 T1 T3 T8 T8 T14 T18 T20 L17 L11 L5 L2 R3 R5 R7 P5 R7 P7 R11 R16 R16 P15 P9 P5 P2 T3 T8 T14 L14 L11 T14 T14 T17 T20 T22 L19 L17 L17 L14 T14 T14 L14 L11 L5 R3 R10 R12 P10 P10 P9 P9 P7 R10 R12 P7 P4 P3 T2 T8 T11 T14".split(" ");
const histogram = document.getElementById("histogram");
macd.forEach((bar, k) => {
  const h = bar.slice(1) / 3;
  const above = bar[0] === "T" || bar[0] === "L";
  add(histogram, "rect", bar[0], { x: x(k - 1) - 4.1, y: above ? 455.7 - h : 455.7, width: 8.1, height: h + 0.3 });
});

// tapered arrows: x1 y1 x2 y2 colour
const arrows = [
  [773, 175, 791.5, 106.5, "#1fa81f"], [792, 109, 804, 135.5, "#1fa81f"], [804, 133, 836.5, 57.5, "#1fa81f"],
  [814, 168, 836, 111, "#ffb90f"], [838, 111, 849.5, 132.5, "#ffb90f"], [850, 131, 878, 66, "#ffb90f"],
  [804, 138, 825.5, 211.5, "#f81d12"], [827, 207, 842, 173, "#f81d12"], [842.5, 174, 864, 248.5, "#f81d12"]
];
const layer = document.getElementById("arrows");
for (const [x1, y1, x2, y2, fill] of arrows) {
  const len = Math.hypot(x2 - x1, y2 - y1);
  const ux = (x2 - x1) / len, uy = (y2 - y1) / len;
  const at = (d, w) => `${x1 + ux * d - uy * w},${y1 + uy * d + ux * w}`;
  const points = [at(0, 0.3), at(len - 4.5, 1.6), at(len - 5.5, 3.6), at(len, 0), at(len - 5.5, -3.6), at(len - 4.5, -1.6), at(0, -0.3)];
  add(layer, "polygon", "", { points: points.join(" "), fill });
}
```
